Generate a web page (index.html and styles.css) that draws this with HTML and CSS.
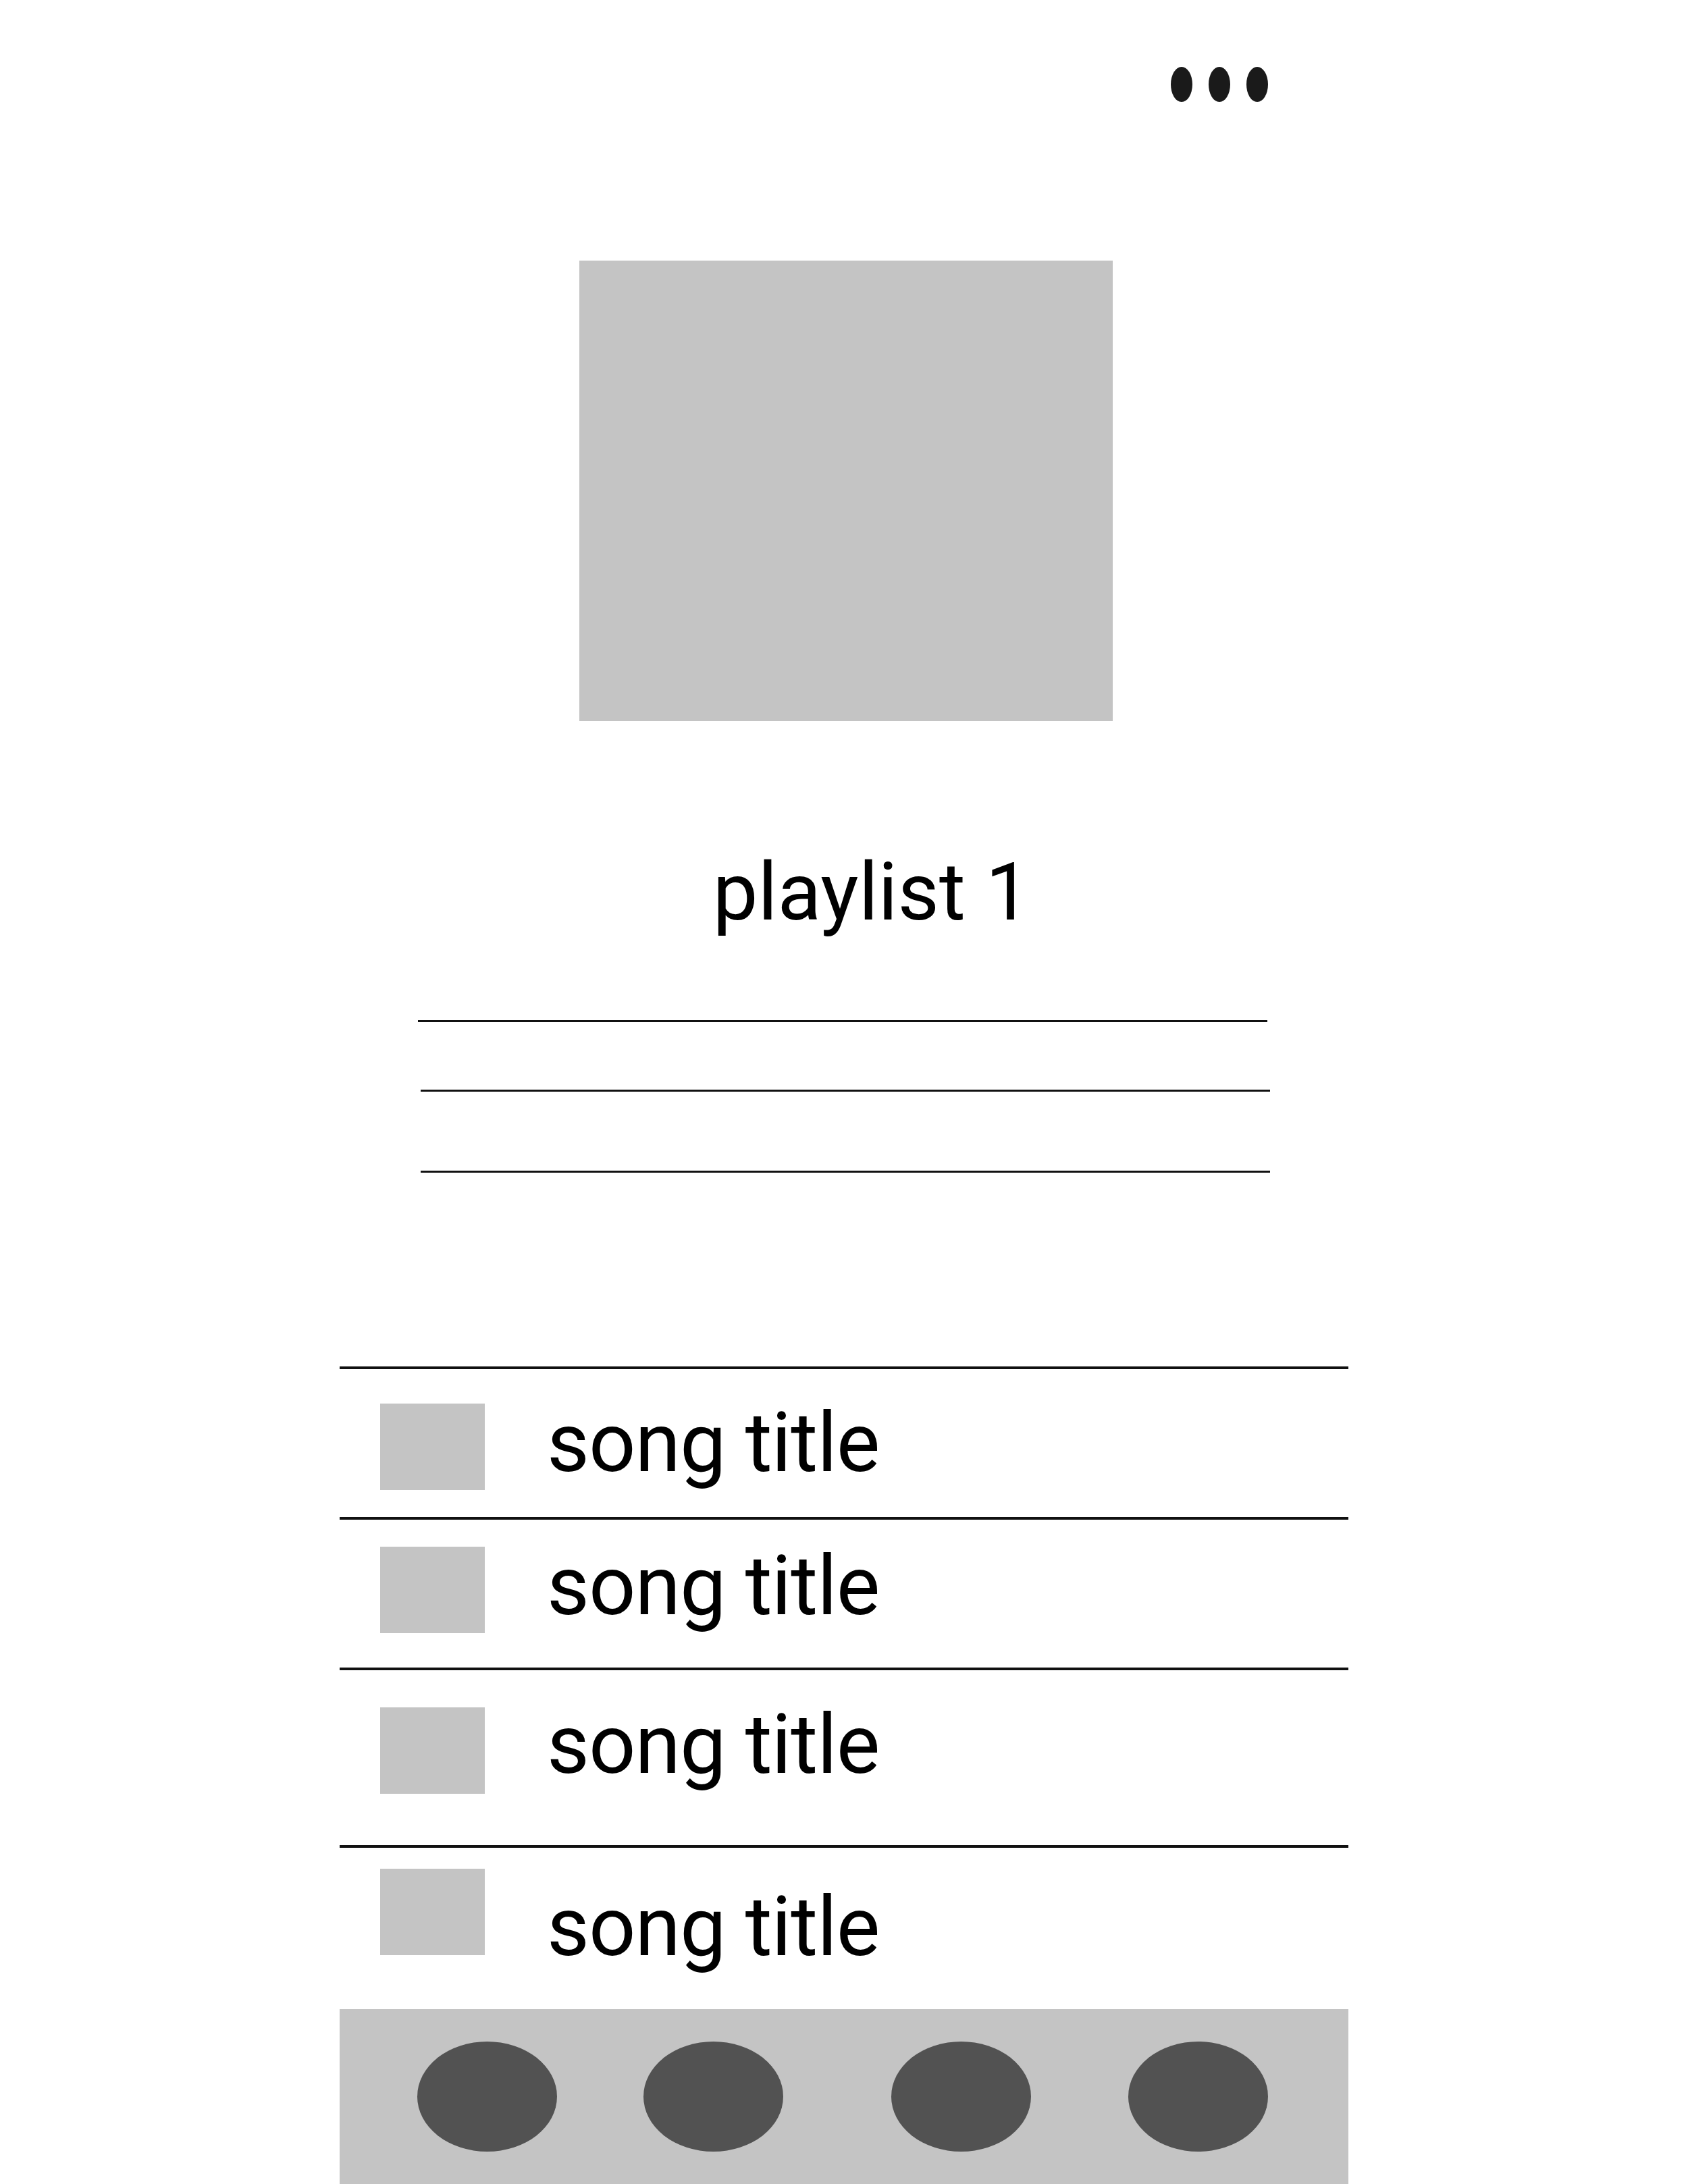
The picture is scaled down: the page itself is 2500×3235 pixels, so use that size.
FILE: index.html
```html
<!DOCTYPE html>
<html lang="en">
<head>
  <meta charset="UTF-8">
  <title>Playlist</title>
  <link rel="stylesheet" href="styles.css">
</head>
<body>

  <div class="phone">
    <div class="topbar">
      <span class="dot"></span>
      <span class="dot"></span>
      <span class="dot"></span>
    </div>

    <div class="cover"></div>

    <h1 class="playlist-name">playlist 1</h1>

    <!-- description placeholder lines -->
    <div class="desc">
      <div class="desc-line"></div>
      <div class="desc-line"></div>
      <div class="desc-line"></div>
    </div>

    <ul class="songs">
      <li class="song"><span class="thumb"></span><span class="song-title">song title</span></li>
      <li class="song song-2"><span class="thumb"></span><span class="song-title">song title</span></li>
      <li class="song song-3"><span class="thumb"></span><span class="song-title">song title</span></li>
      <li class="song song-4"><span class="thumb"></span><span class="song-title">song title</span></li>
    </ul>

    <nav class="tabbar">
      <span class="tab"></span>
      <span class="tab"></span>
      <span class="tab"></span>
      <span class="tab"></span>
    </nav>
  </div>

</body>
</html>
```

FILE: styles.css
```css
:root {
  --placeholder: #c4c4c4;
  --tab-color: #525252;
  --line-color: #111;
}

* {
  box-sizing: border-box;
}

body {
  margin: 0;
  background: #fff;
  font-family: Roboto, "Liberation Sans", sans-serif;
  color: #000;
}

.phone {
  width: 1494px;
  margin: 0 auto;
}

.topbar {
  display: flex;
  justify-content: flex-end;
  gap: 24px;
  padding: 99px 119px 0 0;
}

.dot {
  width: 32px;
  height: 52px;
  border-radius: 50%;
  background: #1a1a1a;
}

.cover {
  width: 790px;
  height: 682px;
  margin: 235px 0 0 355px;
  background: var(--placeholder);
}

.playlist-name {
  margin: 194px 0 0;
  padding-left: 82px;
  font-size: 119px;
  font-weight: 400;
  line-height: 1;
  text-align: center;
}

.desc-line {
  width: 1258px;
  height: 3px;
  margin: 117px 0 0 120px;
  background: var(--line-color);
}

.desc-line:first-child {
  margin: 130px 0 0 116px;
}

.desc-line:nth-child(2) {
  margin-top: 100px;
}

.songs {
  list-style: none;
  margin: 287px 0 0;
  padding: 0;
}

.song {
  display: flex;
  align-items: flex-start;
  height: 223px;
  padding: 51px 0 0 60px;
  border-top: 4px solid var(--line-color);
}

.thumb {
  width: 155px;
  height: 128px;
  background: var(--placeholder);
}

.song-title {
  margin: -2px 0 0 92px;
  font-size: 122px;
  letter-spacing: -1px;
  line-height: 1;
}

.song-2 {
  padding-top: 40px;
}

.song-3 {
  height: 263px;
  padding-top: 55px;
}

.song-3 .song-title {
  margin-top: -5px;
}

.song-4 {
  height: 243px;
  padding-top: 31px;
}

.song-4 .song-title {
  margin-top: 26px;
}

.tabbar {
  display: flex;
  height: 259px;
  padding: 48px 0 0 115px;
  background: var(--placeholder);
}

.tab {
  width: 207px;
  height: 163px;
  border-radius: 50%;
  background: var(--tab-color);
}

.tab:nth-child(2) { margin-left: 128px; }
.tab:nth-child(3) { margin-left: 160px; }
.tab:nth-child(4) { margin-left: 144px; }
```
